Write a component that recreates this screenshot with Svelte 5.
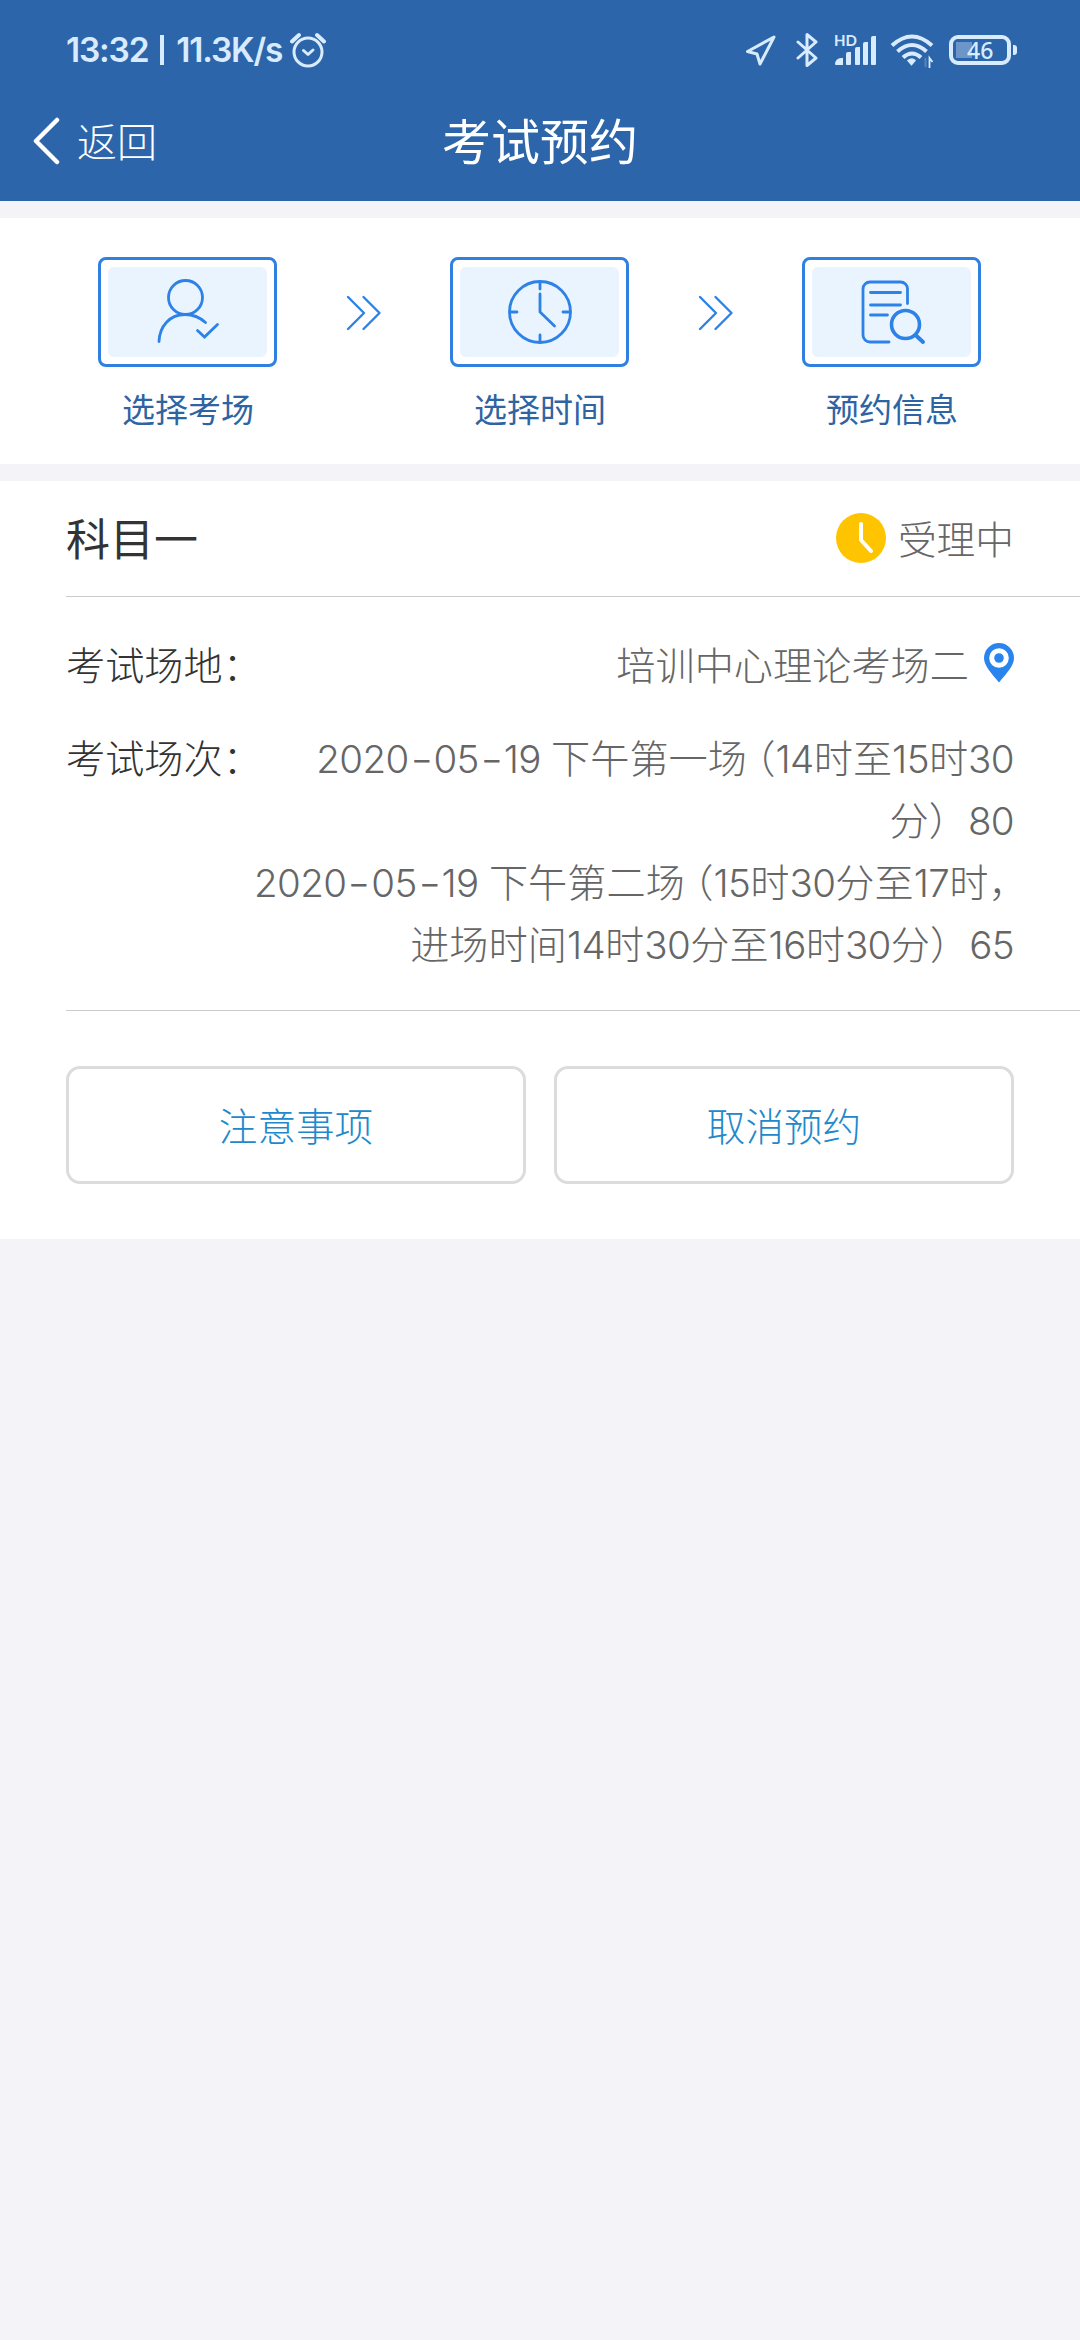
<script lang="ts">
  type Token = { text: string; kind: string };

  const steps = [
    { icon: 'place', label: '选择考场' },
    { icon: 'time', label: '选择时间' },
    { icon: 'info', label: '预约信息' },
  ];

  const sessions = [
    '2020-05-19 下午第一场（14时至15时30',
    '分）80',
    '2020-05-19 下午第二场（15时30分至17时，',
    '进场时间14时30分至16时30分）65',
  ];

  const bars = [7, 13, 18, 23, 29];

  // latin digits and narrow punctuation are spaced differently from the hanzi
  function tokenize(line: string): Token[] {
    return line
      .split(/(\d+ ?|-|（|，)/)
      .filter((t) => t !== '')
      .map((text) => {
        if (/^\d/.test(text)) return { text, kind: 'num' };
        if (text === '-') return { text, kind: 'num dash' };
        if (text === '（') return { text, kind: 'open' };
        if (text === '，') return { text, kind: 'comma' };
        return { text, kind: 'cjk' };
      });
  }
</script>

<div class="screen">
  <header class="header">
    <div class="status">
      <div class="status-left">
        <span class="clock">13:32</span>
        <span class="bar"></span>
        <span class="speed">11.3K/s</span>
        <svg width="36" height="36" viewBox="0 0 36 36" fill="none" stroke="currentColor" stroke-width="3" stroke-linecap="round" stroke-linejoin="round" aria-hidden="true"><circle cx="18" cy="20" r="14"></circle><path d="M13.500 18.500l4.500 4 5-4.500"></path><path d="M2 9.500 9 3M34 9.500 27 3" stroke-width="4"></path></svg>
      </div>
      <div class="status-right">
        <svg class="nav-icon" width="32" height="32" viewBox="0 0 32 32" fill="none" stroke="currentColor" stroke-width="3" stroke-linejoin="round" aria-hidden="true"><path d="M29 3 2.500 17.500l9.500 2.500L15 30z"></path></svg>
        <svg class="bt-icon" width="22" height="36" viewBox="0 0 22 36" fill="none" stroke="currentColor" stroke-width="3" stroke-linecap="round" stroke-linejoin="round" aria-hidden="true"><path d="M2 10l18 16-9 7.500V2.500l9 7.500L2 26"></path></svg>
        <div class="signal">
          <span class="hd">HD</span>
          <div class="signal-bars">
            {#each bars as h}
              <i style:height="{h}px"></i>
            {/each}
          </div>
        </div>
        <svg class="wifi-icon" width="44" height="36" viewBox="0 0 44 36" fill="none" stroke="currentColor" stroke-width="4" aria-hidden="true"><path d="M2 13.500Q22-4.500 42 13.500"></path><path d="M7.500 19.500Q22 6.500 36.500 19.500"></path><path d="M13 25.500q9-8 18 0"></path><path d="M18 28.500q4-3 7 0l-3.500 4z" fill="currentColor" stroke-width="1.500"></path><path d="M39.500 36V26l3 4" stroke-width="1.800"></path><path d="M35.500 26v9" stroke-width="2" opacity=".25"></path></svg>
        <div class="battery"><i></i><span>46</span></div>
        <div class="battery-cap"></div>
      </div>
    </div>
    <div class="titlebar">
      <button class="back">
        <svg width="28" height="48" viewBox="0 0 28 48" fill="none" stroke="currentColor" stroke-width="4.500" stroke-linecap="round" stroke-linejoin="round" aria-hidden="true"><path d="M25 3 4 24l21 21"></path></svg>
        <span>返回</span>
      </button>
      <h1>考试预约</h1>
    </div>
  </header>

  <section class="steps">
    {#each steps as step, i}
      {#if i > 0}
        <svg class="arrow" width="36" height="36" viewBox="0 0 36 36" fill="none" stroke="currentColor" stroke-width="2.400" stroke-linecap="round" stroke-linejoin="round" aria-hidden="true"><path d="M2 2l16 16L2 34"></path><path d="M17.500 2l16 16-16 16"></path></svg>
      {/if}
      <div class="step">
        <div class="step-box">
          <div class="step-fill">
            <svg width="70" height="66" viewBox="0 0 70 66" fill="none" stroke="currentColor" stroke-width="2.800" stroke-linecap="round" aria-hidden="true">
              {#if step.icon === 'place'}
                <circle cx="32.500" cy="18.500" r="17"></circle>
                <path d="M6 62.500C6.500 47 17 35.500 32 35.500c8 0 15 3 20.500 8"></path>
                <path d="M44.500 51.500l7 6.500L64.500 45.500"></path>
              {:else if step.icon === 'time'}
                <circle cx="35" cy="33" r="30.500"></circle>
                <path d="M35 3v7M35 56v7M5 33h7M58 33h7M35 15v18l14.500 14"></path>
              {:else}
                <path d="M50.500 24.500V10a7 7 0 0 0-7-7H13a7 7 0 0 0-7 7v46a7 7 0 0 0 7 7h19"></path>
                <path d="M13.500 13.500h30M13.500 26h30M13.500 36h17"></path>
                <circle cx="48.500" cy="45.500" r="14" stroke-width="3.600"></circle>
                <path d="M58.500 56l7.500 7" stroke-width="4"></path>
              {/if}
            </svg>
          </div>
        </div>
        <span class="step-label">{step.label}</span>
      </div>
    {/each}
  </section>

  <section class="card">
    <div class="card-head">
      <h2>科目一</h2>
      <div class="state">
        <svg width="50" height="50" viewBox="0 0 50 50" aria-hidden="true"><circle cx="25" cy="25" r="25" fill="#ffc400"></circle><path d="M25 11v16l10 11" fill="none" stroke="#fff" stroke-width="4" stroke-linecap="round" stroke-linejoin="round"></path></svg>
        <span>受理中</span>
      </div>
    </div>

    <div class="card-body">
      <div class="row">
        <span class="row-label">考试场地：</span>
        <div class="row-value place">
          <span>培训中心理论考场二</span>
          <svg width="30" height="40" viewBox="0 0 30 40" aria-hidden="true"><path d="M15 0a15 15 0 0 0-15 15c0 8 8 16 15 24.500C22 31 30 23 30 15A15 15 0 0 0 15 0z" fill="#2a84ee"></path><circle cx="15" cy="15" r="7.300" fill="#2a84ee" stroke="#fff" stroke-width="5"></circle></svg>
        </div>
      </div>
      <div class="row">
        <span class="row-label">考试场次：</span>
        <div class="row-value">
          {#each sessions as line}
            <p>{#each tokenize(line) as t}<span class={t.kind}>{t.text}</span>{/each}</p>
          {/each}
        </div>
      </div>
    </div>

    <div class="actions">
      <button>注意事项</button>
      <button>取消预约</button>
    </div>
  </section>
</div>

<style>
  :global(body) {
    background: #f3f3f8;
  }

  .screen {
    min-height: 2340px;
    background: #f3f3f8;
    color: #333;
    font-family: 'Noto Sans CJK SC', sans-serif;
    font-weight: 300;
  }

  h1,
  h2,
  p {
    margin: 0;
    font-weight: inherit;
  }

  button {
    padding: 0;
    border: none;
    background: none;
    font: inherit;
    color: inherit;
  }

  svg {
    display: block;
    flex-shrink: 0;
  }

  .header {
    height: 201px;
    margin-bottom: 17px;
    background: #2c65a9;
    color: #fff;
  }

  .status {
    display: flex;
    justify-content: space-between;
    height: 99px;
    padding: 0 63px 0 66px;
    color: #d8ebff;
  }

  .status-left,
  .status-right {
    display: flex;
    align-items: center;
  }

  .status-left {
    font-family: Inter, sans-serif;
    font-size: 33.500px;
    font-weight: 600;
    line-height: 34px;
    letter-spacing: -1.200px;
  }

  .bar {
    width: 4px;
    height: 30px;
    margin: 0 12px 0 12px;
    background: currentColor;
  }

  .speed {
    margin-right: 8px;
  }

  .bt-icon {
    margin-left: 19px;
  }

  .signal {
    position: relative;
    width: 41px;
    height: 32px;
    margin-left: 17px;
  }

  .hd {
    position: absolute;
    top: -1px;
    left: -1px;
    font-family: Lato, sans-serif;
    font-size: 15px;
    font-weight: 700;
    line-height: 15px;
  }

  .signal-bars {
    display: flex;
    align-items: flex-end;
    justify-content: space-between;
    height: 31px;
  }

  .signal-bars i {
    width: 5px;
    border-radius: 2px 0 1px 1px;
    background: currentColor;
  }

  .signal-bars i:first-child {
    width: 8px;
    border-radius: 6px 0 0 1px;
  }

  .wifi-icon {
    margin-left: 14px;
  }

  .battery {
    display: flex;
    align-items: center;
    box-sizing: border-box;
    width: 62px;
    height: 30px;
    margin-left: 15px;
    padding-left: 3px;
    border: 4px solid currentColor;
    border-radius: 9px;
    font-family: 'Noto Sans', sans-serif;
    font-size: 23px;
    font-weight: 500;
    line-height: 22px;
  }

  .battery i {
    width: 16px;
    height: 16px;
    margin-right: -5px;
    background: #6c96ca;
  }

  .battery span {
    position: relative;
  }

  .battery-cap {
    width: 4px;
    height: 10px;
    margin: 0 0 0 2px;
    border-radius: 0 3px 3px 0;
    background: currentColor;
  }

  .titlebar {
    display: grid;
    grid-template-columns: 1fr auto 1fr;
    align-items: center;
    height: 84px;
  }

  .back {
    display: flex;
    align-items: center;
    gap: 17px;
    padding-left: 32px;
    font-size: 40px;
    line-height: 60px;
  }

  .back span {
    padding-bottom: 2px;
  }

  h1 {
    padding-bottom: 4px;
    font-size: 49px;
    font-weight: 400;
    line-height: 70px;
  }

  .steps {
    display: flex;
    justify-content: space-between;
    box-sizing: border-box;
    height: 246px;
    margin-bottom: 17px;
    padding: 39px 99px 0 98px;
    background: #fff;
    color: #2c82e6;
  }

  .step {
    display: flex;
    flex-direction: column;
    align-items: center;
    width: 179px;
  }

  .step-box {
    box-sizing: border-box;
    width: 179px;
    height: 110px;
    padding: 7px;
    border: 3px solid #2f80e0;
    border-radius: 8px;
  }

  .step-fill {
    display: flex;
    align-items: center;
    justify-content: center;
    height: 90px;
    border-radius: 6px;
    background: #eaf4fe;
  }

  .step-label {
    margin-top: 17px;
    padding-left: 1px;
    color: #2f64a3;
    font-size: 33px;
    font-weight: 400;
    line-height: 48px;
  }

  .arrow {
    margin-top: 38px;
  }

  .card {
    height: 758px;
    padding-left: 66px;
    background: #fff;
  }

  .card-head {
    display: flex;
    align-items: center;
    justify-content: space-between;
    box-sizing: border-box;
    height: 116px;
    padding-right: 66px;
    border-bottom: 1px solid #ccc;
  }

  h2 {
    padding-bottom: 3px;
    font-size: 44px;
    font-weight: 400;
    line-height: 60px;
  }

  .state {
    display: flex;
    align-items: center;
    gap: 12px;
    color: #666;
    font-size: 38.700px;
    line-height: 60px;
  }

  .state svg {
    margin-bottom: 1px;
  }

  .state span {
    padding-bottom: 3px;
  }

  .card-body {
    display: flex;
    flex-direction: column;
    gap: 31px;
    box-sizing: border-box;
    height: 414px;
    padding: 35px 66px 0 0;
    border-bottom: 1px solid #ccc;
    font-size: 39.200px;
    line-height: 62px;
  }

  .row {
    display: flex;
    justify-content: space-between;
  }

  .row-label {
    flex-shrink: 0;
    white-space: nowrap;
  }

  .row-value {
    margin-left: -20px;
    color: #666;
    text-align: right;
    white-space: nowrap;
  }

  .row-value p {
    height: 62px;
  }

  .place {
    display: flex;
    align-items: center;
    gap: 15px;
  }

  .num {
    font-family: Inter, sans-serif;
    font-size: 38.500px;
    font-weight: 300;
    line-height: 1;
    letter-spacing: -0.600px;
    white-space: pre;
  }

  .dash {
    display: inline-block;
    padding: 0 4px;
    transform: scaleX(1.3);
  }

  .open,
  .comma {
    font-feature-settings: 'halt';
  }

  .open {
    padding-left: 9px;
  }

  .comma {
    padding-right: 6px;
  }

  .actions {
    display: grid;
    grid-template-columns: 1fr 1fr;
    gap: 28px;
    padding: 55px 66px 0 0;
  }

  .actions button {
    height: 118px;
    padding-bottom: 3px;
    border: 3px solid #dcdcdc;
    border-radius: 14px;
    color: #2189cb;
    font-size: 38.600px;
  }
</style>
